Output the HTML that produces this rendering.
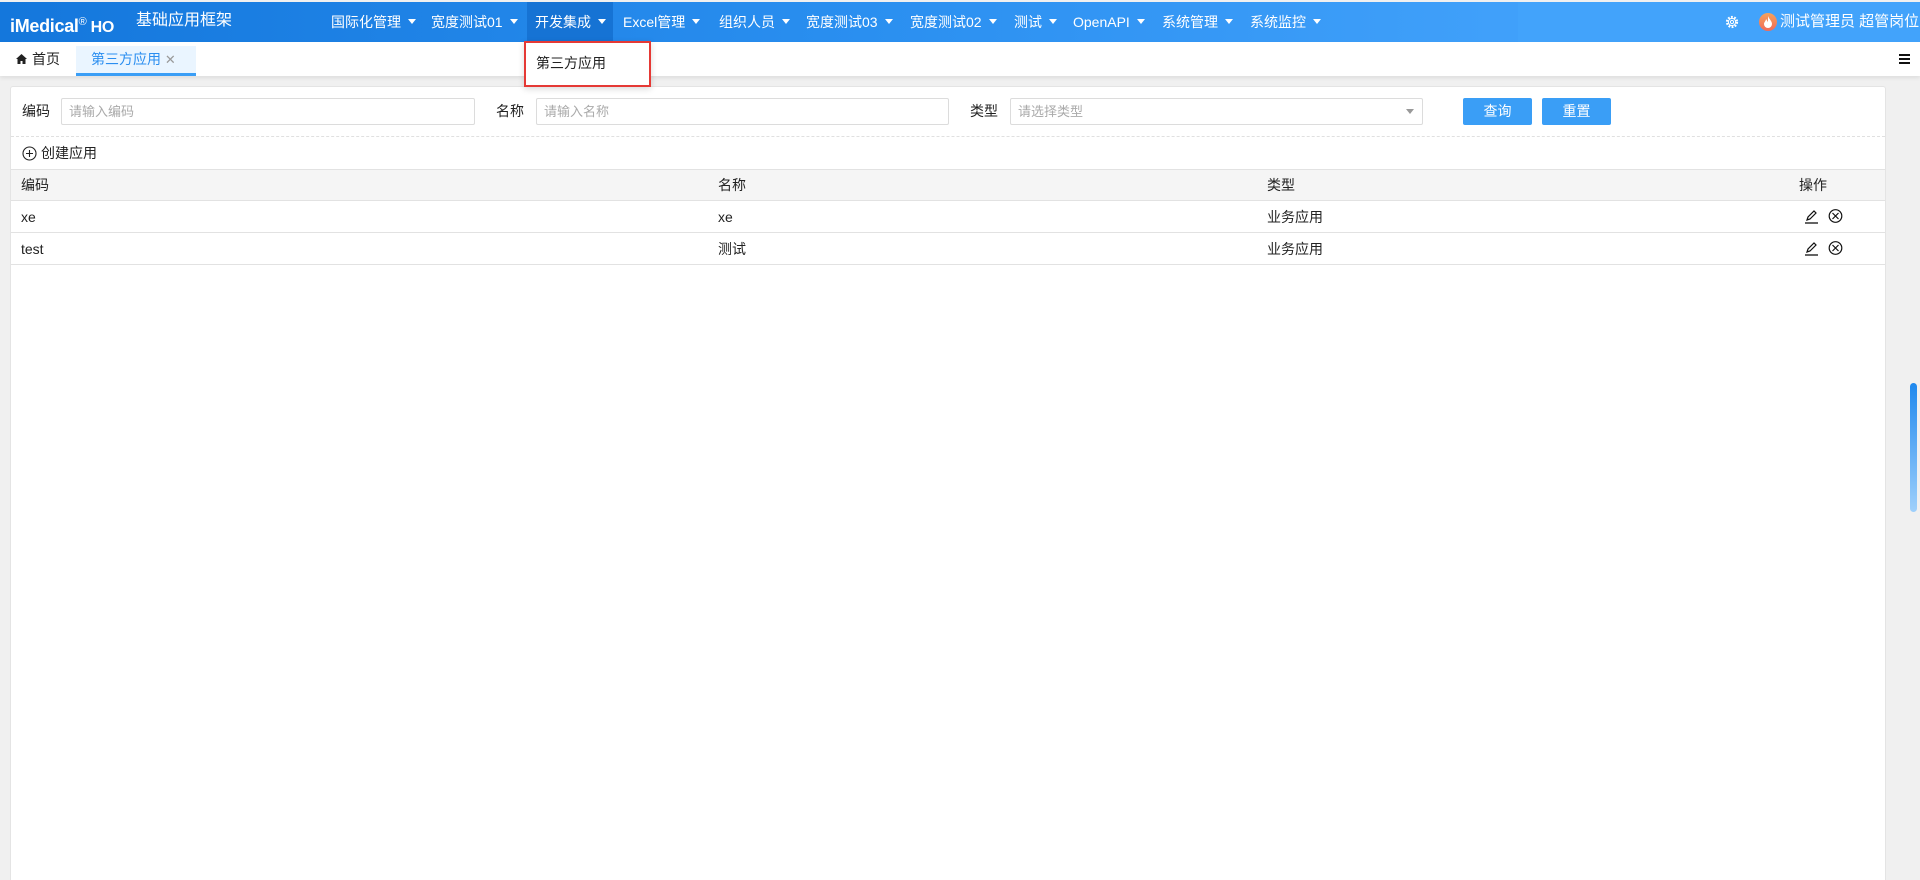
<!DOCTYPE html>
<html><head><meta charset="utf-8"><style>
*{margin:0;padding:0;box-sizing:border-box}
html,body{width:1920px;height:880px;overflow:hidden}
body{background:#f0f0f0;font-family:"Liberation Sans","Noto Sans CJK SC",sans-serif;font-size:14px;color:#222;position:relative}
.hdr{position:absolute;left:0;top:2px;width:1920px;height:40px;background:linear-gradient(90deg,#1477dc 0%,#2a8ff0 45%,#40a0fa 78%,#44a4fc 100%)}
.hdr .shade{position:absolute;left:1518px;top:0;width:402px;height:40px;background:#42a3fb}
.t{position:absolute;white-space:nowrap;line-height:20px}
.menu{color:#fff;font-size:14px;top:12px}
.menu:after{content:"";display:inline-block;margin-left:7px;border-left:4px solid transparent;border-right:4px solid transparent;border-top:5px solid #fff;vertical-align:3px}
.tabs{position:absolute;top:42px;left:0;width:1920px;height:34px;background:#fff;box-shadow:0 2px 4px rgba(0,0,0,.08)}
.panel{position:absolute;left:10px;top:86px;width:1876px;height:794px;background:#fff;border:1px solid #e4e4e4;border-bottom:none;border-radius:3px 3px 0 0}
.inp{position:absolute;top:98px;height:27px;border:1px solid #dcdcdc;border-radius:2px;color:#aaa;font-size:13px;padding:0 7px;line-height:25px}
.btn{position:absolute;top:98px;height:27px;width:69px;background:#3a9ef6;color:#fff;border-radius:2px;text-align:center;line-height:27px;font-size:14px}
.row{position:absolute;left:11px;width:1874px;border-bottom:1px solid #e2e2e2}
</style></head><body>
<div class="hdr"><div class="shade"></div>
<div style="position:absolute;left:527px;top:0;width:86px;height:40px;background:#1673d4"></div>
</div>
<div class="t" style="left:10px;top:12px;color:#fff;font-size:18px;font-weight:bold;letter-spacing:-0.3px">iMedical<sup style="font-size:11px;font-weight:normal">®</sup><span style="font-size:16px"> HO</span></div>
<div class="t" style="left:136px;top:11px;color:#fff;font-size:16px">基础应用框架</div>
<div class="t menu" style="left:331px">国际化管理</div>
<div class="t menu" style="left:431px">宽度测试01</div>
<div class="t menu" style="left:535px">开发集成</div>
<div class="t menu" style="left:623px">Excel管理</div>
<div class="t menu" style="left:719px">组织人员</div>
<div class="t menu" style="left:806px">宽度测试03</div>
<div class="t menu" style="left:910px">宽度测试02</div>
<div class="t menu" style="left:1014px">测试</div>
<div class="t menu" style="left:1073px">OpenAPI</div>
<div class="t menu" style="left:1162px">系统管理</div>
<div class="t menu" style="left:1250px">系统监控</div>
<svg style="position:absolute;left:1725px;top:15px" width="14" height="14" viewBox="0 0 14 14"><circle cx="7" cy="7" r="5" fill="none" stroke="#fff" stroke-width="2.2" stroke-dasharray="1.8 1.4"/><circle cx="7" cy="7" r="3.6" fill="none" stroke="#fff" stroke-width="1"/><circle cx="7" cy="7" r="1.6" fill="none" stroke="#fff" stroke-width="1"/></svg>
<div style="position:absolute;left:1759px;top:13px;width:18px;height:18px;border-radius:50%;background:linear-gradient(#f7a25a,#f06a5a)"></div>
<svg style="position:absolute;left:1763px;top:16px" width="10" height="12" viewBox="0 0 10 12"><path d="M5 0C6 3 9 5 9 8a4 4 0 0 1-8 0C1 6 3 5 3 3 4 4 4 5 5 6 5 4 5 2 5 0z" fill="#fff"/></svg>
<div class="t" style="left:1780px;top:12px;color:#fff;font-size:15px">测试管理员 超管岗位</div>

<div class="tabs"></div>
<svg style="position:absolute;left:16px;top:54px" width="11" height="10" viewBox="0 0 11 10"><path d="M5.5 0L0 5h1.5v5h3V7h2v3h3V5H11z" fill="#222"/></svg>
<div class="t" style="left:32px;top:49px;font-size:14px">首页</div>
<div style="position:absolute;left:76px;top:46px;width:120px;height:30px;background:#eaf5ff;border-bottom:3px solid #3a9ef6"></div>
<div class="t" style="left:91px;top:49px;color:#2b8ef0;font-size:14px">第三方应用 <span style="color:#999;font-size:13px">✕</span></div>
<div style="position:absolute;left:1899px;top:54px;width:11px;height:2px;background:#111;box-shadow:0 4px 0 #111,0 8px 0 #111"></div>

<div class="panel"></div>
<div class="t" style="left:22px;top:101px">编码</div>
<div class="inp" style="left:61px;width:414px">请输入编码</div>
<div class="t" style="left:496px;top:101px">名称</div>
<div class="inp" style="left:536px;width:413px">请输入名称</div>
<div class="t" style="left:970px;top:101px">类型</div>
<div class="inp" style="left:1010px;width:413px">请选择类型<span style="position:absolute;right:8px;top:10px;border-left:4px solid transparent;border-right:4px solid transparent;border-top:5px solid #999"></span></div>
<div class="btn" style="left:1463px">查询</div>
<div class="btn" style="left:1542px">重置</div>
<div style="position:absolute;left:11px;top:136px;width:1874px;border-top:1px dashed #e0e0e0"></div>
<svg style="position:absolute;left:22px;top:146px" width="15" height="15" viewBox="0 0 15 15"><circle cx="7.5" cy="7.5" r="6.5" fill="none" stroke="#222" stroke-width="1.1"/><path d="M7.5 4v7M4 7.5h7" stroke="#222" stroke-width="1.1"/></svg>
<div class="t" style="left:41px;top:143px">创建应用</div>

<div class="row" style="top:169px;height:32px;background:#f5f5f5;border-top:1px solid #e2e2e2"></div>
<div class="row" style="top:201px;height:32px"></div>
<div class="row" style="top:233px;height:32px"></div>
<div class="t" style="left:21px;top:175px">编码</div>
<div class="t" style="left:718px;top:175px">名称</div>
<div class="t" style="left:1267px;top:175px">类型</div>
<div class="t" style="left:1799px;top:175px">操作</div>
<div class="t" style="left:21px;top:207px">xe</div>
<div class="t" style="left:718px;top:207px">xe</div>
<div class="t" style="left:1267px;top:207px">业务应用</div>
<div class="t" style="left:21px;top:239px">test</div>
<div class="t" style="left:718px;top:239px">测试</div>
<div class="t" style="left:1267px;top:239px">业务应用</div>
<svg style="position:absolute;left:1804px;top:208px" width="42" height="16" viewBox="0 0 42 16"><path d="M3 12l1-3 6-6 2 2-6 6z" fill="none" stroke="#111" stroke-width="1.2"/><path d="M1 15h13" stroke="#111" stroke-width="1.3"/><circle cx="31.5" cy="8" r="6.3" fill="none" stroke="#111" stroke-width="1.2"/><path d="M28.5 5l6 6M34.5 5l-6 6" stroke="#111" stroke-width="1.2"/></svg>
<svg style="position:absolute;left:1804px;top:240px" width="42" height="16" viewBox="0 0 42 16"><path d="M3 12l1-3 6-6 2 2-6 6z" fill="none" stroke="#111" stroke-width="1.2"/><path d="M1 15h13" stroke="#111" stroke-width="1.3"/><circle cx="31.5" cy="8" r="6.3" fill="none" stroke="#111" stroke-width="1.2"/><path d="M28.5 5l6 6M34.5 5l-6 6" stroke="#111" stroke-width="1.2"/></svg>

<div style="position:absolute;left:1910px;top:383px;width:7px;height:129px;border-radius:4px;background:linear-gradient(#1e88ee,#9fd0fb)"></div>

<div style="position:absolute;left:524px;top:41px;width:127px;height:46px;background:#fff;border:2px solid #e53935;box-shadow:0 2px 6px rgba(0,0,0,.15)"></div>
<div class="t" style="left:536px;top:53px;font-size:14px">第三方应用</div>
</body></html>
